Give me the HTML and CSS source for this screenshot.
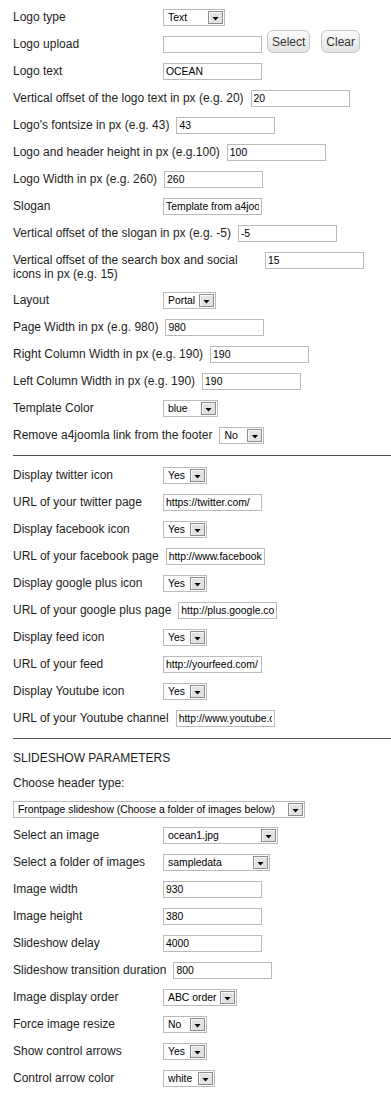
FILE: index.html
```html
<!DOCTYPE html>
<html lang="en">
<head>
    <meta charset="UTF-8">
    <meta name="viewport" content="width=device-width, initial-scale=1.0">
    <title>Template parameters</title>
    <link rel="stylesheet" href="styles.css">
</head>
<body>
    <div class="params">
        <div class="row">
            <label class="lbl">Logo type</label>
            <div class="select w62"><span class="val">Text</span><span class="arrow"></span></div>
        </div>
        <div class="row">
            <label class="lbl">Logo upload</label>
            <input type="text" class="field" value="">
            <button class="btn btn-first">Select</button>
            <button class="btn">Clear</button>
        </div>
        <div class="row">
            <label class="lbl">Logo text</label>
            <input type="text" class="field" value="OCEAN">
        </div>
        <div class="row">
            <label class="lbl">Vertical offset of the logo text in px (e.g. 20)</label>
            <input type="text" class="field" value="20">
        </div>
        <div class="row">
            <label class="lbl">Logo's fontsize in px (e.g. 43)</label>
            <input type="text" class="field" value="43">
        </div>
        <div class="row">
            <label class="lbl">Logo and header height in px (e.g.100)</label>
            <input type="text" class="field" value="100">
        </div>
        <div class="row">
            <label class="lbl">Logo Width in px (e.g. 260)</label>
            <input type="text" class="field" value="260">
        </div>
        <div class="row">
            <label class="lbl">Slogan</label>
            <input type="text" class="field" value="Template from a4joomla">
        </div>
        <div class="row">
            <label class="lbl">Vertical offset of the slogan in px (e.g. -5)</label>
            <input type="text" class="field" value="-5">
        </div>
        <div class="row">
            <label class="lbl">Vertical offset of the search box and social icons in px (e.g. 15)</label>
            <input type="text" class="field" value="15">
        </div>
        <div class="row">
            <label class="lbl">Layout</label>
            <div class="select w53"><span class="val">Portal</span><span class="arrow"></span></div>
        </div>
        <div class="row">
            <label class="lbl">Page Width in px (e.g. 980)</label>
            <input type="text" class="field" value="980">
        </div>
        <div class="row">
            <label class="lbl">Right Column Width in px (e.g. 190)</label>
            <input type="text" class="field" value="190">
        </div>
        <div class="row">
            <label class="lbl">Left Column Width in px (e.g. 190)</label>
            <input type="text" class="field" value="190">
        </div>
        <div class="row">
            <label class="lbl">Template Color</label>
            <div class="select w55"><span class="val">blue</span><span class="arrow"></span></div>
        </div>
        <div class="row">
            <label class="lbl">Remove a4joomla link from the footer</label>
            <div class="select w45"><span class="val">No</span><span class="arrow"></span></div>
        </div>

        <hr class="sep">

        <div class="row">
            <label class="lbl">Display twitter icon</label>
            <div class="select w44"><span class="val">Yes</span><span class="arrow"></span></div>
        </div>
        <div class="row">
            <label class="lbl">URL of your twitter page</label>
            <input type="text" class="field" value="https://twitter.com/">
        </div>
        <div class="row">
            <label class="lbl">Display facebook icon</label>
            <div class="select w44"><span class="val">Yes</span><span class="arrow"></span></div>
        </div>
        <div class="row">
            <label class="lbl">URL of your facebook page</label>
            <input type="text" class="field" value="http://www.facebook.com/">
        </div>
        <div class="row">
            <label class="lbl">Display google plus icon</label>
            <div class="select w44"><span class="val">Yes</span><span class="arrow"></span></div>
        </div>
        <div class="row">
            <label class="lbl">URL of your google plus page</label>
            <input type="text" class="field" value="http://plus.google.com/">
        </div>
        <div class="row">
            <label class="lbl">Display feed icon</label>
            <div class="select w44"><span class="val">Yes</span><span class="arrow"></span></div>
        </div>
        <div class="row">
            <label class="lbl">URL of your feed</label>
            <input type="text" class="field" value="http://yourfeed.com/">
        </div>
        <div class="row">
            <label class="lbl">Display Youtube icon</label>
            <div class="select w44"><span class="val">Yes</span><span class="arrow"></span></div>
        </div>
        <div class="row">
            <label class="lbl">URL of your Youtube channel</label>
            <input type="text" class="field" value="http://www.youtube.com/">
        </div>

        <hr class="sep">

        <div class="row heading">
            <span class="lbl">SLIDESHOW PARAMETERS</span>
        </div>
        <div class="row compact">
            <label class="lbl">Choose header type:</label>
        </div>
        <div class="row compact">
            <div class="select w292"><span class="val">Frontpage slideshow (Choose a folder of images below)</span><span class="arrow"></span></div>
        </div>
        <div class="row">
            <label class="lbl">Select an image</label>
            <div class="select w115"><span class="val">ocean1.jpg</span><span class="arrow"></span></div>
        </div>
        <div class="row">
            <label class="lbl">Select a folder of images</label>
            <div class="select w107"><span class="val">sampledata</span><span class="arrow"></span></div>
        </div>
        <div class="row">
            <label class="lbl">Image width</label>
            <input type="text" class="field" value="930">
        </div>
        <div class="row">
            <label class="lbl">Image height</label>
            <input type="text" class="field" value="380">
        </div>
        <div class="row">
            <label class="lbl">Slideshow delay</label>
            <input type="text" class="field" value="4000">
        </div>
        <div class="row">
            <label class="lbl">Slideshow transition duration</label>
            <input type="text" class="field" value="800">
        </div>
        <div class="row">
            <label class="lbl">Image display order</label>
            <div class="select w74"><span class="val">ABC order</span><span class="arrow"></span></div>
        </div>
        <div class="row">
            <label class="lbl">Force image resize</label>
            <div class="select w44"><span class="val">No</span><span class="arrow"></span></div>
        </div>
        <div class="row">
            <label class="lbl">Show control arrows</label>
            <div class="select w44"><span class="val">Yes</span><span class="arrow"></span></div>
        </div>
        <div class="row">
            <label class="lbl">Control arrow color</label>
            <div class="select w52"><span class="val">white</span><span class="arrow"></span></div>
        </div>
    </div>
</body>
</html>
```

FILE: styles.css
```css
* {
    margin: 0;
    padding: 0;
    box-sizing: border-box;
}

body {
    font-family: 'Liberation Sans', Arial, sans-serif;
    background: #ffffff;
    color: #1e1e1e;
}

.params {
    padding: 4px 0 0 13px;
}

.row {
    display: flex;
    align-items: flex-start;
    min-height: 27px;
    padding: 5px 0;
}

.row.compact {
    min-height: 26px;
    padding-bottom: 4px;
}

.row.heading {
    min-height: 25px;
    padding-bottom: 4px;
}

.lbl {
    flex: 0 1 auto;
    min-width: 150px;
    max-width: 252px;
    padding-right: 7px;
    margin: 1px 0;
    font-size: 12px;
    line-height: 14px;
}

/* text inputs */
.field {
    flex: 0 0 auto;
    width: 99px;
    height: 17px;
    border: 1px solid #bababa;
    padding: 0 2px;
    font-family: 'Liberation Sans', Arial, sans-serif;
    font-size: 10.4px;
    color: #000;
    background: #fff;
    outline: none;
}

.btn {
    flex: 0 0 auto;
    height: 23px;
    margin-top: -6px;
    padding: 0 4px;
    border: 1px solid #c6c6c6;
    border-radius: 6px;
    background: linear-gradient(#fbfbfb, #e4e4e4);
    font-family: 'Liberation Sans', Arial, sans-serif;
    font-size: 12px;
    color: #333;
}

.btn-first {
    margin-left: 5px;
    margin-right: 11px;
}

/* drop downs */
.select {
    flex: 0 0 auto;
    display: flex;
    align-items: center;
    height: 17px;
    border: 1px solid #bababa;
    background: #fff;
    font-size: 10.4px;
    color: #000;
}

.select .val {
    flex: 1;
    padding-left: 4px;
    white-space: nowrap;
    overflow: hidden;
}

.select .arrow {
    flex: 0 0 15px;
    display: flex;
    justify-content: center;
    align-items: center;
    height: 13px;
    margin-right: 1px;
    padding-top: 2px;
    border: 1px solid #8c8c8c;
    background: #e2e2e2;
    box-shadow: inset 1px 1px #fafafa;
}

.select .arrow::after {
    content: "";
    width: 7px;
    height: 4px;
    background: #000;
    clip-path: polygon(0 0, 100% 0, 50% 100%);
}

.w44 { width: 44px; }
.w45 { width: 45px; }
.w52 { width: 52px; }
.w53 { width: 53px; }
.w55 { width: 55px; }
.w62 { width: 62px; }
.w74 { width: 74px; }
.w107 { width: 107px; }
.w115 { width: 115px; }
.w292 { width: 292px; }

.sep {
    border: none;
    border-top: 1px solid #505050;
    margin: 6px 0;
}
```
